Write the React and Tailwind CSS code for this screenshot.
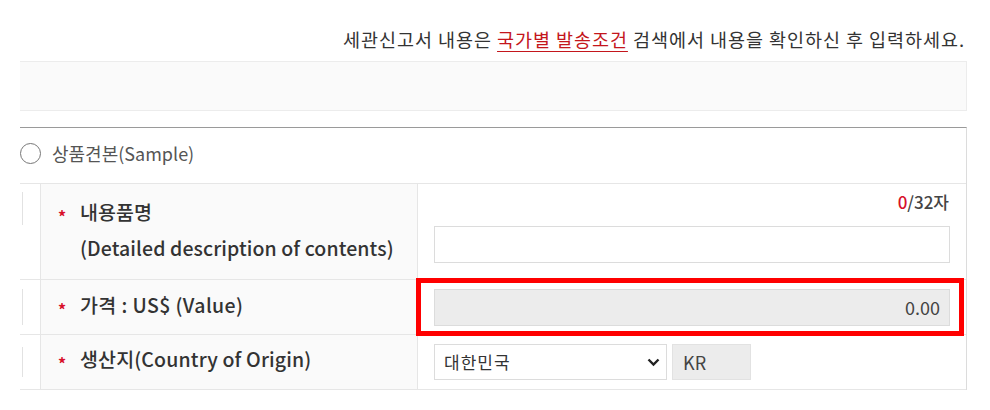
import React from "react";

const F = { fontFamily: '"Noto Sans CJK KR", "Noto Sans", sans-serif' };

function Star() {
  return (
    <span className="w-[22px] h-[20px] flex items-center text-[16px] font-bold text-[#d8102b] leading-none">
      <span className="translate-y-[4px]">*</span>
    </span>
  );
}

export default function App() {
  return (
    <div className="w-[990px] h-[410px] bg-white overflow-hidden text-[#333]" style={F}>
      <p className="h-[61px] pr-[25px] pt-[26px] text-right text-[18.5px] tracking-[0.95px] leading-[26px] text-[#333]">
        세관신고서 내용은{" "}
        <span className="text-[#c4161c] underline underline-offset-[4px]">국가별 발송조건</span>{" "}
        검색에서 내용을 확인하신 후 입력하세요.
      </p>
      <div className="ml-[20px] w-[947px]">
        <div className="h-[50px] border-y border-r border-[#ececec] bg-[#fafafa]" />
        <div className="mt-[16px] border-t border-[#9a9a9a] border-r border-r-[#dcdcdc]">
          <div className="h-[55px] flex items-center gap-[11px] pb-[5px]">
            <span className="w-[21px] h-[21px] rounded-full border-[1.5px] border-[#777] bg-white" />
            <span className="text-[18px] text-[#555]">상품견본(Sample)</span>
          </div>
          <div className="border-t border-[#e6e6e6]">
            {/* row 1 */}
            <div className="flex h-[96px] border-b border-[#e6e6e6]">
              <div className="w-[20px] pt-[8px]">
                <div className="w-[3px] h-[33px] border-r border-[#e2e2e2]" />
              </div>
              <div className="w-[377px] border-l border-[#e6e6e6] bg-[#fafafa] flex pl-[17px] pt-[10px]">
                <div className="h-[36px] flex items-center">
                  <Star />
                </div>
                <div className="text-[19.5px] tracking-[0.1px] font-medium leading-[36px] text-[#333]">
                  <div>내용품명</div>
                  <div>(Detailed description of contents)</div>
                </div>
              </div>
              <div className="flex-1 border-l border-[#e6e6e6] px-[16px] pt-[6px]">
                <div className="text-right text-[17px] leading-[24px] font-medium text-[#444] pr-[1px]">
                  <span className="text-[#d8102b]">0</span>/32자
                </div>
                <div className="mt-[12px] h-[37px] border border-[#dcdcdc] bg-white" />
              </div>
            </div>
            {/* row 2 */}
            <div className="flex h-[55px] border-b border-[#e6e6e6]">
              <div className="w-[20px] flex items-center">
                <div className="w-[3px] h-[36px] border-r border-[#e2e2e2]" />
              </div>
              <div className="w-[377px] border-l border-[#e6e6e6] bg-[#fafafa] flex items-center pl-[17px] pb-[5px]">
                <Star />
                <span className="text-[19.5px] tracking-[0.4px] font-medium text-[#333]">가격 : US$ (Value)</span>
              </div>
              <div className="relative flex-1 border-l border-[#e6e6e6] px-[16px] flex items-center">
                <div className="w-full h-[37px] border border-[#dcdcdc] bg-[#ececec] flex items-center justify-end pr-[9px] text-[18px] text-[#444]">
                  0.00
                </div>
                <div className="absolute left-[-2px] top-[-2px] right-[2px] bottom-[-2px] border-[5px] border-[#ff0000]" />
              </div>
            </div>
            {/* row 3 */}
            <div className="flex h-[55px] border-b border-[#e6e6e6]">
              <div className="w-[20px] flex items-center">
                <div className="w-[3px] h-[30px] border-r border-[#e2e2e2]" />
              </div>
              <div className="w-[377px] border-l border-[#e6e6e6] bg-[#fafafa] flex items-center pl-[17px] pb-[6px]">
                <Star />
                <span className="text-[19.5px] tracking-[0.15px] font-medium text-[#333]">생산지(Country of Origin)</span>
              </div>
              <div className="flex-1 border-l border-[#e6e6e6] px-[16px] flex items-center gap-[5px]">
                <div className="w-[233px] h-[36px] border border-[#dcdcdc] bg-white flex items-center justify-between pl-[9px] pr-[6px] text-[17px] tracking-[1px] text-[#333]">
                  <span>대한민국</span>
                  <svg width="13" height="9" viewBox="0 0 13 9" fill="none">
                    <path d="M1.5 1.5 L6.5 6.5 L11.5 1.5" stroke="#222" strokeWidth="2.4" />
                  </svg>
                </div>
                <div className="w-[79px] h-[36px] bg-[#ececec] border border-[#e2e2e2] flex items-center pl-[10px] text-[18px] text-[#444]">
                  KR
                </div>
              </div>
            </div>
          </div>
        </div>
      </div>
    </div>
  );
}
